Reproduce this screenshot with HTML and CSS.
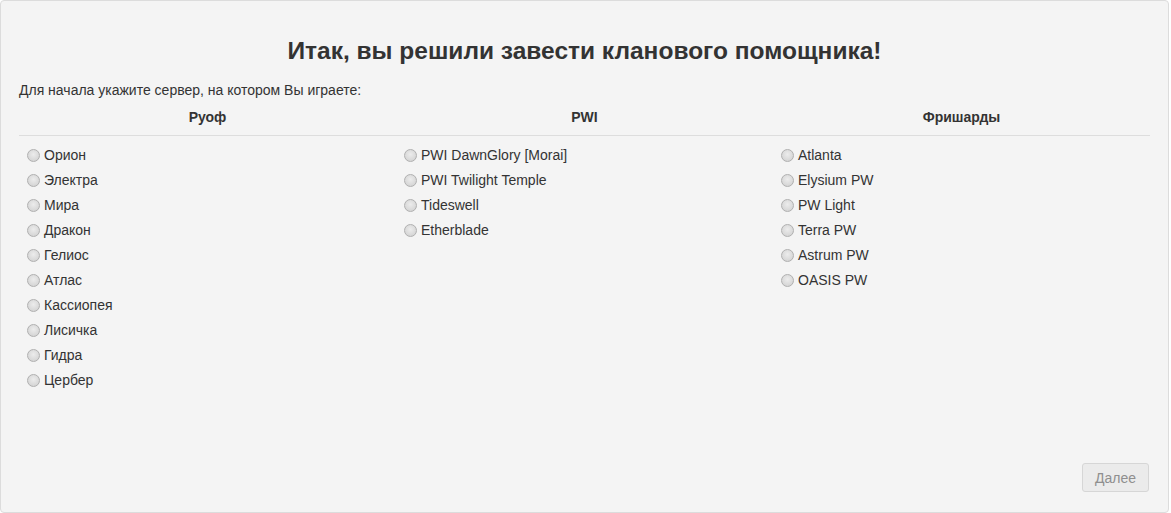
FILE: index.html
```html
<!DOCTYPE html>
<html lang="ru">
<head>
<meta charset="utf-8">
<title>Клановый помощник</title>
<link rel="stylesheet" href="styles.css">
</head>
<body>
<div class="panel">
  <h1 class="title">Итак, вы решили завести кланового помощника!</h1>
  <p class="intro">Для начала укажите сервер, на котором Вы играете:</p>
  <div class="groups">
    <div class="group-head">Руоф</div>
    <div class="group-head">PWI</div>
    <div class="group-head">Фришарды</div>
  </div>
  <div class="divider"></div>
  <div class="groups">
    <ul class="list">
      <li><label class="opt"><span class="radio"></span>Орион</label></li>
      <li><label class="opt"><span class="radio"></span>Электра</label></li>
      <li><label class="opt"><span class="radio"></span>Мира</label></li>
      <li><label class="opt"><span class="radio"></span>Дракон</label></li>
      <li><label class="opt"><span class="radio"></span>Гелиос</label></li>
      <li><label class="opt"><span class="radio"></span>Атлас</label></li>
      <li><label class="opt"><span class="radio"></span>Кассиопея</label></li>
      <li><label class="opt"><span class="radio"></span>Лисичка</label></li>
      <li><label class="opt"><span class="radio"></span>Гидра</label></li>
      <li><label class="opt"><span class="radio"></span>Цербер</label></li>
    </ul>
    <ul class="list">
      <li><label class="opt"><span class="radio"></span>PWI DawnGlory [Morai]</label></li>
      <li><label class="opt"><span class="radio"></span>PWI Twilight Temple</label></li>
      <li><label class="opt"><span class="radio"></span>Tideswell</label></li>
      <li><label class="opt"><span class="radio"></span>Etherblade</label></li>
    </ul>
    <ul class="list">
      <li><label class="opt"><span class="radio"></span>Atlanta</label></li>
      <li><label class="opt"><span class="radio"></span>Elysium PW</label></li>
      <li><label class="opt"><span class="radio"></span>PW Light</label></li>
      <li><label class="opt"><span class="radio"></span>Terra PW</label></li>
      <li><label class="opt"><span class="radio"></span>Astrum PW</label></li>
      <li><label class="opt"><span class="radio"></span>OASIS PW</label></li>
    </ul>
  </div>
  <div class="actions">
    <button class="btn" disabled>Далее</button>
  </div>
</div>
</body>
</html>
```

FILE: styles.css
```css
html, body {
  margin: 0;
  padding: 0;
  background: #ffffff;
}

body {
  font-family: "Liberation Sans", Arial, sans-serif;
  font-size: 14px;
  color: #333333;
}

.panel {
  box-sizing: border-box;
  width: 1169px;
  height: 513px;
  background: #f4f4f4;
  border: 1px solid #dcdcdc;
  border-radius: 4px;
  padding: 0 18px 20px 18px;
  display: flex;
  flex-direction: column;
}

.title {
  margin: 35px 0 0 0;
  font-size: 24.5px;
  line-height: 29px;
  font-weight: bold;
  text-align: center;
  color: #333333;
}

.intro {
  margin: 15px 0 0 0;
  line-height: 20px;
}

.groups {
  display: grid;
  grid-template-columns: 1fr 1fr 1fr;
}

.group-head {
  margin-top: 7px;
  line-height: 20px;
  font-weight: bold;
  text-align: center;
}

.divider {
  margin-top: 8px;
  border-top: 1px solid #dddddd;
}

.list {
  list-style: none;
  margin: 9px 0 0 0;
  padding: 0 0 0 8px;
}

.list li {
  height: 20px;
  margin-bottom: 5px;
}

.opt {
  display: flex;
  align-items: center;
  line-height: 20px;
  gap: 4px;
}

.radio {
  box-sizing: border-box;
  width: 13px;
  height: 13px;
  border-radius: 50%;
  border: 1px solid #b0b0b0;
  background: radial-gradient(circle at 50% 40%, #ececec 0%, #dadada 60%, #cecece 100%);
  flex: none;
}

.actions {
  margin-top: auto;
  display: flex;
  justify-content: flex-end;
  padding-right: 1px;
}

.btn {
  box-sizing: border-box;
  width: 67px;
  height: 29px;
  font-family: "Liberation Sans", Arial, sans-serif;
  font-size: 14px;
  color: #8f8f8f;
  background: #ebebeb;
  border: 1px solid #d6d6d6;
  border-radius: 3px;
  padding: 0;
}
```
